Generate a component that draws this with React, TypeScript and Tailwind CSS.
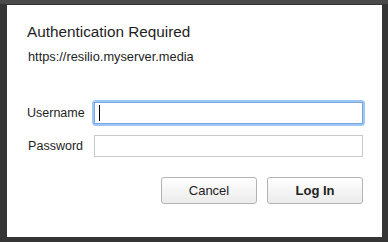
import React from "react";

export default function App() {
  return (
    <div
      className="w-[388px] h-[242px] bg-[#353535] flex flex-col overflow-hidden"
      style={{ fontFamily: '"Liberation Sans", Arial, sans-serif' }}
    >
      <div className="h-[4px] bg-[#4a4a4a] shrink-0" />
      <div className="h-[1px] shrink-0" />
      <div className="flex pl-[7px]">
        <div className="w-[375px] h-[232px] bg-white flex flex-col pl-[20px]">
          <div className="mt-[18px] text-[15.3px] leading-[18px] text-[#1e1e1e]">Authentication Required</div>
          <div className="mt-[8px] text-[12.8px] leading-[15px] text-[#1e1e1e] pl-[1px]">https://resilio.myserver.media</div>
          <div className="mt-[36px] flex items-center">
            <div className="w-[67px] text-right text-[12.5px] text-[#1e1e1e]">
              <span className="mr-[11px]">Username</span>
            </div>
            <div className="rounded-[4px] bg-[#9cc7f6] p-[2px] -ml-[2px]">
              <div className="w-[269px] h-[22px] bg-white border border-[#7aa6dc] flex items-center pl-[4px]">
                <div className="w-[1px] h-[16px] bg-black" />
              </div>
            </div>
          </div>
          <div className="mt-[9px] flex items-center">
            <div className="w-[67px] text-right text-[12.5px] text-[#1e1e1e]">
              <span className="mr-[11px]">Password</span>
            </div>
            <div className="w-[269px] h-[22px] bg-white border border-[#c9c9c9]" />
          </div>
          <div className="mt-[20px] flex justify-end pr-[19px] gap-[10px]">
            <button className="w-[96px] h-[27px] rounded-[3px] border border-[#b3b3b3] bg-gradient-to-b from-[#ffffff] to-[#ebebeb] text-[13px] text-[#222]">
              Cancel
            </button>
            <button className="w-[96px] h-[27px] rounded-[3px] border border-[#b3b3b3] bg-gradient-to-b from-[#ffffff] to-[#ebebeb] text-[13px] font-bold text-[#222]">
              Log In
            </button>
          </div>
        </div>
      </div>
    </div>
  );
}
